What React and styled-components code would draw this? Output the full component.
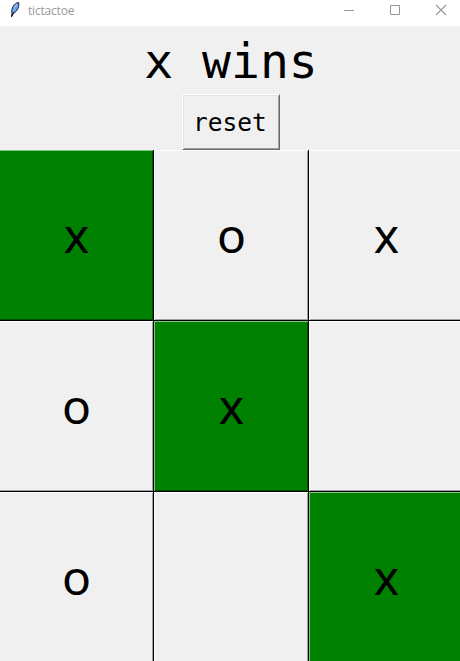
import React from "react";
import styled, { createGlobalStyle } from "styled-components";

const GlobalStyle = createGlobalStyle`
  * { box-sizing: border-box; }
  body { margin: 0; overflow: hidden; background: #f0f0f0; }
`;

const Window = styled.main`
  width: 460px;
  height: 661px;
  overflow: hidden;
  display: flex;
  flex-direction: column;
  background: #f0f0f0;
  color: #000;
  font-family: "DejaVu Sans Mono", monospace;
`;

const TitleBar = styled.header`
  flex: none;
  height: 26px;
  display: flex;
  align-items: flex-start;
  padding-left: 8px;
  background: #fff;
`;

const Title = styled.span`
  flex: 1;
  margin-left: 6px;
  font: 12px/16px "Open Sans", sans-serif;
  letter-spacing: -0.2px;
  padding-top: 3px;
  color: #999;
`;

const Controls = styled.div`
  display: flex;
  gap: 33px;
  padding: 4px 12px 0 0;
`;

const ControlButton = styled.button`
  width: 13px;
  height: 13px;
  padding: 0;
  border: 0;
  background: none;
  svg { display: block; }
`;

const Status = styled.h1`
  flex: none;
  height: 68px;
  margin: 0;
  padding-left: 2px;
  font-size: 48px;
  font-weight: 400;
  line-height: 70px;
  text-align: center;
`;

const ResetButton = styled.button`
  flex: none;
  align-self: center;
  width: 98px;
  height: 56px;
  margin-left: 2px;
  padding: 2px 2px 0 0;
  border: 1px solid;
  border-color: #fff #696969 #696969 #fff;
  box-shadow: inset 1px 1px #e3e3e3, inset -1px -1px #a0a0a0;
  background: #f0f0f0;
  color: #000;
  font: 24.5px/52px "DejaVu Sans Mono", monospace;
`;

const Board = styled.section`
  flex: none;
  display: grid;
  grid-template-columns: 154px 155px 155px;
  grid-template-rows: repeat(3, 171px);
`;

const Cell = styled.button`
  padding: 0 0 2px;
  border: 0;
  background: ${(p) => (p.$winning ? "#008000" : "#f0f0f0")};
  box-shadow: ${(p) =>
    p.$winning
      ? "inset -1px -1px #000, inset 1px 1px #7fc97f, inset -2px -2px #005000"
      : "inset -1px -1px #000, inset 1px 1px #fff, inset -2px -2px #a0a0a0"};
  clip-path: ${(p) => (p.$edge ? "inset(0 0 0 1px)" : "none")};
  margin-left: ${(p) => (p.$edge ? "-1px" : "0")};
  color: #000;
  font: 48px/1 "Noto Sans", sans-serif;
`;

const cells = [
  { mark: "x", winning: true },
  { mark: "o" },
  { mark: "x" },
  { mark: "o" },
  { mark: "x", winning: true },
  { mark: "" },
  { mark: "o" },
  { mark: "" },
  { mark: "x", winning: true },
];

const FeatherIcon = () => (
  <svg width="14" height="18" viewBox="0 0 14 18">
    <path d="M3.5 16.8 4 13.2C2.9 8.4 6 3.4 10.6 2.4c.8 3.4-.7 8.6-5 10.8Z" fill="#5e9cf0" stroke="#17202c" strokeWidth="1" />
    <path d="M3.6 16.5 5.4 12.2" stroke="#17202c" strokeWidth="1" />
    <path d="M5.2 11.4 9.2 4.2" stroke="#6fabf5" strokeWidth="2.2" />
    <path d="M6.2 7.2 9 3.9" stroke="#b4d2f7" strokeWidth=".9" />
  </svg>
);

export default function App() {
  return (
    <>
      <GlobalStyle />
      <Window>
        <TitleBar>
          <FeatherIcon />
          <Title>tictactoe</Title>
          <Controls>
            <ControlButton aria-label="Minimize">
              <svg width="13" height="13"><path d="M1 6.5h10" stroke="#999" /></svg>
            </ControlButton>
            <ControlButton aria-label="Maximize">
              <svg width="13" height="13"><path d="M1.5 1.5h9v9h-9Z" fill="none" stroke="#999" /></svg>
            </ControlButton>
            <ControlButton aria-label="Close">
              <svg width="13" height="13"><path d="m1 1 10 10M11 1 1 11" stroke="#999" strokeWidth="1.1" /></svg>
            </ControlButton>
          </Controls>
        </TitleBar>
        <Status>x wins</Status>
        <ResetButton>reset</ResetButton>
        <Board>
          {cells.map((cell, i) => (
            <Cell key={i} $winning={cell.winning} $edge={i % 3 === 0}>
              {cell.mark}
            </Cell>
          ))}
        </Board>
      </Window>
    </>
  );
}
